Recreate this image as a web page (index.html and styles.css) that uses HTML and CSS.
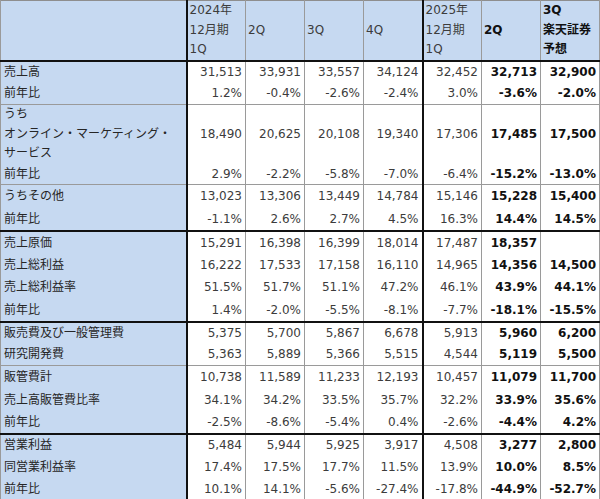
FILE: index.html
```html
<!DOCTYPE html>
<html lang="ja">
<head>
<meta charset="utf-8">
<link rel="stylesheet" href="styles.css">
</head>
<body>
<table class="fin">
  <colgroup>
    <col class="c-label">
    <col class="c-num"><col class="c-num"><col class="c-num"><col class="c-num">
    <col class="c-num"><col class="c-num"><col class="c-num">
  </colgroup>
  <thead>
    <tr class="h-head">
      <th class="lab"></th>
      <th class="hd">2024年<br>12月期<br>1Q</th>
      <th class="hd mid">2Q</th>
      <th class="hd mid">3Q</th>
      <th class="hd mid sepR">4Q</th>
      <th class="hd">2025年<br>12月期<br>1Q</th>
      <th class="hd mid b">2Q</th>
      <th class="hd b">3Q<br>楽天証券<br>予想</th>
    </tr>
  </thead>
  <tbody>
    <tr class="h22"><td class="lab">売上高</td><td>31,513</td><td>33,931</td><td>33,557</td><td class="sepR">34,124</td><td>32,452</td><td class="b">32,713</td><td class="b">32,900</td></tr>
    <tr class="h22 gEnd"><td class="lab">前年比</td><td>1.2%</td><td>-0.4%</td><td>-2.6%</td><td class="sepR">-2.4%</td><td>3.0%</td><td class="b">-3.6%</td><td class="b">-2.0%</td></tr>

    <tr class="h58"><td class="lab ml">うち<br>オンライン・マーケティング・<br>サービス</td><td>18,490</td><td>20,625</td><td>20,108</td><td class="sepR">19,340</td><td>17,306</td><td class="b">17,485</td><td class="b">17,500</td></tr>
    <tr class="h21 gEnd"><td class="lab">前年比</td><td>2.9%</td><td>-2.2%</td><td>-5.8%</td><td class="sepR">-7.0%</td><td>-6.4%</td><td class="b">-15.2%</td><td class="b">-13.0%</td></tr>

    <tr class="h23"><td class="lab">うちその他</td><td>13,023</td><td>13,306</td><td>13,449</td><td class="sepR">14,784</td><td>15,146</td><td class="b">15,228</td><td class="b">15,400</td></tr>
    <tr class="h23 gThick"><td class="lab">前年比</td><td>-1.1%</td><td>2.6%</td><td>2.7%</td><td class="sepR">4.5%</td><td>16.3%</td><td class="b">14.4%</td><td class="b">14.5%</td></tr>

    <tr class="h23"><td class="lab">売上原価</td><td>15,291</td><td>16,398</td><td>16,399</td><td class="sepR">18,014</td><td>17,487</td><td class="b">18,357</td><td class="b"></td></tr>
    <tr class="h22"><td class="lab">売上総利益</td><td>16,222</td><td>17,533</td><td>17,158</td><td class="sepR">16,110</td><td>14,965</td><td class="b">14,356</td><td class="b">14,500</td></tr>
    <tr class="h23"><td class="lab">売上総利益率</td><td>51.5%</td><td>51.7%</td><td>51.1%</td><td class="sepR">47.2%</td><td>46.1%</td><td class="b">43.9%</td><td class="b">44.1%</td></tr>
    <tr class="h23 gThick"><td class="lab">前年比</td><td>1.4%</td><td>-2.0%</td><td>-5.5%</td><td class="sepR">-8.1%</td><td>-7.7%</td><td class="b">-18.1%</td><td class="b">-15.5%</td></tr>

    <tr class="h22"><td class="lab">販売費及び一般管理費</td><td>5,375</td><td>5,700</td><td>5,867</td><td class="sepR">6,678</td><td>5,913</td><td class="b">5,960</td><td class="b">6,200</td></tr>
    <tr class="h22 gEnd"><td class="lab">研究開発費</td><td>5,363</td><td>5,889</td><td>5,366</td><td class="sepR">5,515</td><td>4,544</td><td class="b">5,119</td><td class="b">5,500</td></tr>

    <tr class="h23"><td class="lab">販管費計</td><td>10,738</td><td>11,589</td><td>11,233</td><td class="sepR">12,193</td><td>10,457</td><td class="b">11,079</td><td class="b">11,700</td></tr>
    <tr class="h22"><td class="lab">売上高販管費比率</td><td>34.1%</td><td>34.2%</td><td>33.5%</td><td class="sepR">35.7%</td><td>32.2%</td><td class="b">33.9%</td><td class="b">35.6%</td></tr>
    <tr class="h23 gThick"><td class="lab">前年比</td><td>-2.5%</td><td>-8.6%</td><td>-5.4%</td><td class="sepR">0.4%</td><td>-2.6%</td><td class="b">-4.4%</td><td class="b">4.2%</td></tr>

    <tr class="h22"><td class="lab">営業利益</td><td>5,484</td><td>5,944</td><td>5,925</td><td class="sepR">3,917</td><td>4,508</td><td class="b">3,277</td><td class="b">2,800</td></tr>
    <tr class="h22"><td class="lab">同営業利益率</td><td>17.4%</td><td>17.5%</td><td>17.7%</td><td class="sepR">11.5%</td><td>13.9%</td><td class="b">10.0%</td><td class="b">8.5%</td></tr>
    <tr class="h23"><td class="lab">前年比</td><td>10.1%</td><td>14.1%</td><td>-5.6%</td><td class="sepR">-27.4%</td><td>-17.8%</td><td class="b">-44.9%</td><td class="b">-52.7%</td></tr>
  </tbody>
</table>
</body>
</html>
```

FILE: styles.css
```css
html, body {
  margin: 0;
  padding: 0;
  background: #ffffff;
}

.fin {
  border-collapse: collapse;
  table-layout: fixed;
  width: 599px;
  font-family: "DejaVu Sans", "Noto Sans CJK JP", sans-serif;
  font-size: 12px;
  color: #3c3c3c;
  border: 1px solid #8e8e8e;
}

.c-label { width: 186px; }
.c-num { width: 59px; }

.fin th, .fin td {
  padding: 0 3px 0 3px;
  border-left: 1px solid #9a9a9a;
  border-right: 1px solid #9a9a9a;
  white-space: nowrap;
  overflow: hidden;
}

.fin td {
  text-align: right;
  vertical-align: middle;
  line-height: 16px;
}

.fin th {
  font-weight: normal;
  text-align: left;
  vertical-align: top;
  line-height: 19.5px;
  background: #c6d9f1;
  padding-left: 2px;
}

.fin th.mid { vertical-align: middle; }

.fin .lab {
  text-align: left;
  background: #c6d9f1;
  color: #262626;
  padding-left: 3px;
  border-right: 2px solid #111111;
}

.fin .lab.ml { line-height: 19.5px; }

.fin .sepR { border-right: 2px solid #111111; }

.fin .b {
  font-weight: bold;
  color: #111111;
}

.h-head { height: 60px; }
.h-head th { border-bottom: 2px solid #111111; }

.h21 { height: 21px; }
.h22 { height: 22px; }
.h23 { height: 23px; }
.h58 { height: 58px; }

.gEnd td { border-bottom: 1px solid #9a9a9a; }
.gThick td { border-bottom: 2px solid #111111; }
```
